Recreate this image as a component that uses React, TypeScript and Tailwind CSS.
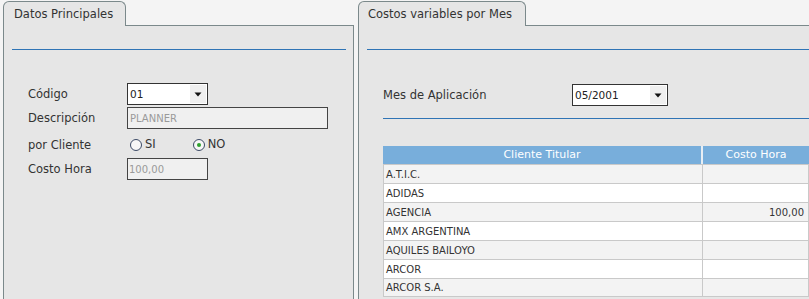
import React from "react";

const font = "font-['Tahoma','DejaVu_Sans',sans-serif]";

function Select({ value, w }: { value: string; w: string }) {
  return (
    <div className={`${w} h-[22px] border border-[#333] bg-white flex items-stretch`}>
      <div className="flex-1 pl-[2px] pt-[4px] text-[10.5px] leading-[13px] text-[#222]">{value}</div>
      <div className="w-[16px] my-[1px] mr-[1px] bg-[#efefef] flex items-center justify-center">
        <svg width="8" height="5" viewBox="0 0 8 5">
          <polygon points="0.5,0.5 7.5,0.5 4,4.5" fill="#111" />
        </svg>
      </div>
    </div>
  );
}

function Radio({ checked }: { checked?: boolean }) {
  return (
    <div className="w-[12px] h-[12px] rounded-full border border-[#3c4a66] bg-[#f7f7f7] flex items-center justify-center">
      {checked && <div className="w-[4px] h-[4px] rounded-full bg-[#2fa12f]" />}
    </div>
  );
}

function Label({ children }: { children: React.ReactNode }) {
  return <div className="text-[11.5px] text-[#333] leading-[14px]">{children}</div>;
}

const rows: [string, string][] = [
  ["A.T.I.C.", ""],
  ["ADIDAS", ""],
  ["AGENCIA", "100,00"],
  ["AMX ARGENTINA", ""],
  ["AQUILES BAILOYO", ""],
  ["ARCOR", ""],
  ["ARCOR S.A.", ""],
];

export default function App() {
  return (
    <div className={`w-[809px] h-[299px] overflow-hidden bg-[#f4f4f4] flex pt-[1px] pl-[3px] gap-[4px] ${font}`}>
      {/* Left panel */}
      <div className="w-[351px] shrink-0 flex flex-col">
        <div className="flex h-[25px] shrink-0">
          <div className="w-[123px] border border-b-0 border-[#7b898b] rounded-t-[6px] bg-[#e6e6e6] pl-[10px] pt-[5px] text-[11.5px] leading-[14px] text-[#333]">
            Datos Principales
          </div>
          <div className="flex-1 border-b border-[#7b898b]" />
        </div>
        <div className="flex-1 bg-[#e6e6e6] border-x border-[#7b898b] pt-[23px]">
          <div className="h-[1px] bg-[#2f74b5] ml-[8px] mr-[7px]" />
          <div className="mt-[33px] pl-[24px] flex flex-col">
            <div className="flex items-center h-[22px]">
              <div className="w-[99px]"><Label>Código</Label></div>
              <Select value="01" w="w-[81px]" />
            </div>
            <div className="flex items-center h-[22px] mt-[2px]">
              <div className="w-[99px]"><Label>Descripción</Label></div>
              <div className="w-[201px] h-[22px] border border-[#444] bg-[#f0f0f0] pl-[2px] pt-[4px] text-[10px] leading-[13px] text-[#9a9a9a]">
                PLANNER
              </div>
            </div>
            <div className="flex items-center h-[29px] pt-[2px]">
              <div className="w-[99px]"><Label>por Cliente</Label></div>
              <div className="flex items-center ml-[3px]">
                <Radio />
                <span className="ml-[3px] text-[11.5px] text-[#333]">SI</span>
              </div>
              <div className="flex items-center ml-[37px]">
                <Radio checked />
                <span className="ml-[3px] text-[11.5px] text-[#333]">NO</span>
              </div>
            </div>
            <div className="flex items-center h-[22px]">
              <div className="w-[99px]"><Label>Costo Hora</Label></div>
              <div className="w-[81px] h-[22px] border border-[#444] bg-[#f0f0f0] pl-[1px] pt-[4px] text-[10px] leading-[13px] text-[#9a9a9a]">
                100,00
              </div>
            </div>
          </div>
        </div>
      </div>

      {/* Right panel */}
      <div className="flex-1 min-w-0 flex flex-col">
        <div className="flex h-[25px] shrink-0">
          <div className="w-[168px] shrink-0 border border-b-0 border-[#7b898b] rounded-t-[6px] bg-[#e6e6e6] pl-[9px] pt-[5px] text-[11.5px] leading-[14px] text-[#333]">
            Costos variables por Mes
          </div>
          <div className="flex-1 border-b border-[#7b898b]" />
        </div>
        <div className="flex-1 bg-[#e6e6e6] border-l border-[#7b898b] pt-[23px]">
          <div className="h-[1px] bg-[#2f74b5] ml-[8px]" />
          <div className="mt-[34px] pl-[24px]">
            <div className="flex items-center h-[22px]">
              <div className="w-[189px]"><Label>Mes de Aplicación</Label></div>
              <Select value="05/2001" w="w-[96px]" />
            </div>
            <div className="h-[1px] bg-[#2f74b5] mt-[12px]" />
            <div className="mt-[27px] w-[426px] text-[10px]">
              <div className="flex h-[18px] bg-[#78aedb] text-white text-[11px]">
                <div className="w-[320px] border-r-2 border-[#e8eef4] flex items-center justify-center">Cliente Titular</div>
                <div className="flex-1 flex items-center justify-center">Costo Hora</div>
              </div>
              {rows.map(([name, val], i) => (
                <div
                  key={name}
                  className={`flex h-[19px] border-t border-x border-[#c9c9c9] ${i === rows.length - 1 ? "border-b" : ""} ${i % 2 === 0 ? "bg-[#f3f3f3]" : "bg-white"}`}
                >
                  <div className="w-[319px] border-r border-[#c9c9c9] pl-[2px] flex items-center text-[#333]">{name}</div>
                  <div className="flex-1 flex items-center justify-end pr-[4px] text-[#333]">{val}</div>
                </div>
              ))}
            </div>
          </div>
        </div>
      </div>
    </div>
  );
}
